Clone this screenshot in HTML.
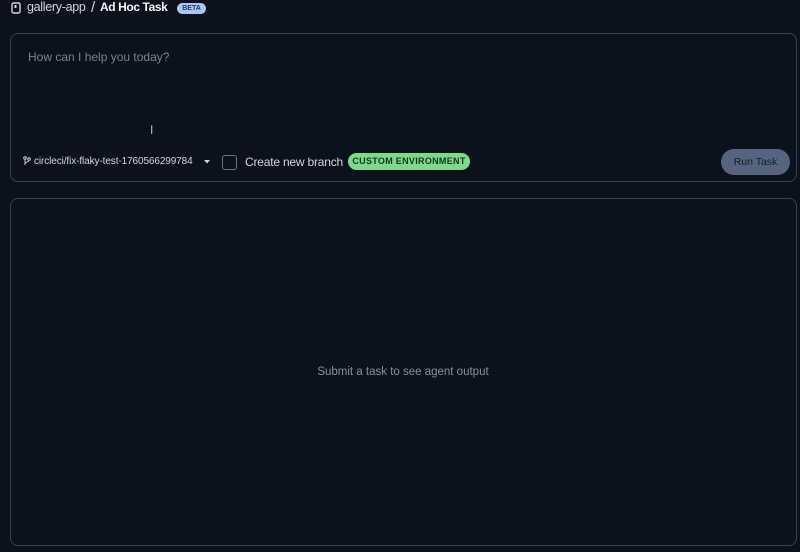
<!DOCTYPE html>
<html><head><style>
*{box-sizing:border-box;margin:0;padding:0}
body{width:800px;height:552px;background:#0d111c;font-family:"Liberation Sans",sans-serif;position:relative;overflow:hidden;color:#e5e7eb}
.abs{position:absolute;white-space:nowrap}
.panel{position:absolute;border:1px solid #3a4150;border-radius:8px}
</style></head><body>
<svg class="abs" style="left:11px;top:2px" width="10" height="12" viewBox="0 0 10 12"><rect x="1" y="1" width="8" height="10" rx="1.5" fill="none" stroke="#d1d5db" stroke-width="1.4"/><rect x="3.5" y="3" width="2" height="3" fill="#d1d5db"/></svg>
<div class="abs" style="left:27px;top:0px;font-size:12.5px;color:#d1d5db;letter-spacing:-0.3px">gallery-app</div>
<div class="abs" style="left:91px;top:-1px;font-size:15px;color:#d1d5db">/</div>
<div class="abs" style="left:100px;top:0px;font-size:12px;font-weight:bold;color:#f3f4f6;letter-spacing:-0.4px">Ad Hoc Task</div>
<div class="abs" style="left:177px;top:3px;width:29px;height:11px;border-radius:6px;background:#a9c7f2;color:#1e3a6a;font-size:7px;font-weight:bold;text-align:center;line-height:11px">BETA</div>

<div class="panel" style="left:10px;top:33px;width:787px;height:149px"></div>
<div class="abs" style="left:28px;top:50px;font-size:12px;color:#7b818c">How can I help you today?</div>
<div class="abs" style="left:150px;top:123px;font-size:12px;color:#bbb">I</div>
<svg class="abs" style="left:23px;top:156px" width="8" height="10" viewBox="0 0 8 10"><circle cx="2" cy="2" r="1.3" fill="none" stroke="#ccc"/><circle cx="6" cy="3" r="1.3" fill="none" stroke="#ccc"/><path d="M2 3.3V9M6 4.3C6 6 2 6 2 8" stroke="#ccc" fill="none"/></svg>
<div class="abs" style="left:34px;top:156px;font-size:10px;color:#d1d5db;letter-spacing:-0.1px">circleci/fix-flaky-test-1760566299784</div>
<svg class="abs" style="left:204px;top:160px" width="6" height="4"><path d="M0 0H6L3 3.5Z" fill="#d1d5db"/></svg>
<div class="abs" style="left:222px;top:155px;width:15px;height:15px;border:1px solid #6b7280;border-radius:3px"></div>
<div class="abs" style="left:245px;top:155px;font-size:12px;color:#d1d5db;letter-spacing:-0.2px">Create new branch</div>
<div class="abs" style="left:348px;top:153px;width:122px;height:17px;border-radius:9px;background:#7fd98c;color:#0f3a1a;font-size:9px;font-weight:bold;text-align:center;line-height:17px;letter-spacing:0.3px">CUSTOM ENVIRONMENT</div>
<div class="abs" style="left:721px;top:149px;width:69px;height:26px;border-radius:13px;background:#56657f;color:#161c2a;font-size:10.5px;text-align:center;line-height:26px">Run Task</div>

<div class="panel" style="left:10px;top:198px;width:787px;height:348px"></div>
<div class="abs" style="left:0;width:806px;top:366px;text-align:center;font-size:11.5px;color:#8a909a">Submit a task to see agent output</div>
</body></html>
